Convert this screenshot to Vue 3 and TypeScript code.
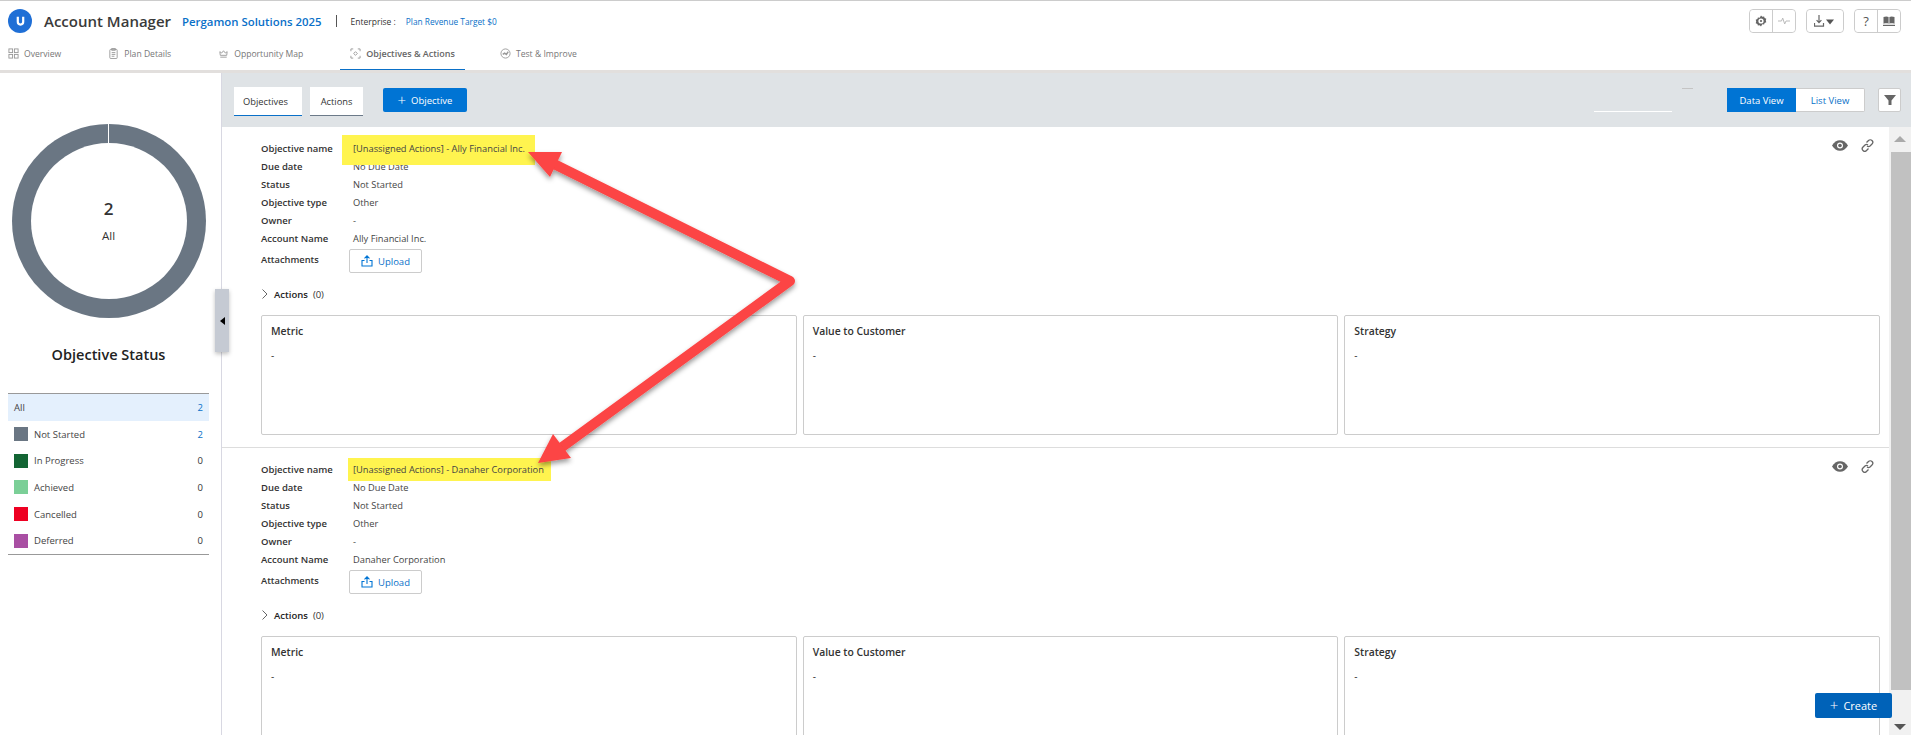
<script setup lang="ts">
interface Objective {
  name: string
  account: string
}

const tabs = [
  { label: 'Overview', icon: 'grid' },
  { label: 'Plan Details', icon: 'clip' },
  { label: 'Opportunity Map', icon: 'crown' },
  { label: 'Objectives & Actions', icon: 'target', active: true },
  { label: 'Test & Improve', icon: 'chart' },
]

const legend = [
  { label: 'Not Started', count: 2, color: '#6a7683' },
  { label: 'In Progress', count: 0, color: '#136534' },
  { label: 'Achieved', count: 0, color: '#7bcf97' },
  { label: 'Cancelled', count: 0, color: '#ee0022' },
  { label: 'Deferred', count: 0, color: '#a94fa3' },
]

const objectives: Objective[] = [
  { name: '[Unassigned Actions] - Ally Financial Inc.', account: 'Ally Financial Inc.' },
  { name: '[Unassigned Actions] - Danaher Corporation', account: 'Danaher Corporation' },
]

const boxes = ['Metric', 'Value to Customer', 'Strategy']
</script>

<template>
  <div class="page">
    <header class="top">
      <div class="title-row">
        <span class="logo">
          <svg width="11" height="12" viewBox="0 0 13 14"><path d="M2 2v6a4.500 4.500 0 0 0 9 0V2H8.400v6a1.900 1.900 0 0 1-3.800 0V2z" fill="#fff" /></svg>
        </span>
        <span class="app-name">Account Manager</span>
        <span class="plan-name">Pergamon Solutions 2025</span>
        <span class="sep"></span>
        <span class="segment">Enterprise :</span>
        <span class="target">Plan Revenue Target $0</span>
        <div class="tools">
          <div class="tool-group">
            <button class="tool">
              <svg width="12" height="12" viewBox="0 0 12 12"><path d="M6 .5l1.300 1.200 1.800-.3.500 1.700 1.700.7-.5 1.700.5 1.800-1.700.6-.5 1.700-1.800-.3L6 11.500l-1.300-1.200-1.800.3-.5-1.700-1.700-.6.5-1.800-.5-1.700 1.700-.7.5-1.700 1.800.3z" fill="#666" /><circle cx="6" cy="6" r="2.600" fill="#fff" /><circle cx="6" cy="6" r="1.100" fill="#666" /></svg>
            </button>
            <button class="tool">
              <svg width="12" height="8" viewBox="0 0 12 8"><path d="M0 4h3.500l1.200-3 2 6 1.300-3h4" fill="none" stroke="#bbb" stroke-width="1" /></svg>
            </button>
          </div>
          <div class="tool-group">
            <button class="tool wide">
              <svg width="22" height="12" viewBox="0 0 22 12"><path d="M5 0v7.500M2.600 5.200L5 7.700l2.400-2.500M.5 8v3.200h9V8" fill="none" stroke="#666" stroke-width="1.200" /><path d="M12 4.500h8l-4 5z" fill="#555" /></svg>
            </button>
          </div>
          <div class="tool-group">
            <button class="tool q">?</button>
            <button class="tool">
              <svg width="12" height="10" viewBox="0 0 12 10"><path d="M.5 1C2.500.3 4.300.3 5.600 1v6.800C4.300 7.200 2.500 7.200.5 7.800zM11.500 1C9.500.3 7.700.3 6.400 1v6.800c1.300-.6 3.100-.6 5.100 0z" fill="#666" /><path d="M0 8.800h12V10H0z" fill="#666" /></svg>
            </button>
          </div>
        </div>
      </div>
      <nav class="tabs">
        <a v-for="t in tabs" :key="t.label" class="tab" :class="{ active: t.active }">
          <svg width="11" height="11" viewBox="0 0 12 12" fill="none" stroke="#999" stroke-width="1">
            <template v-if="t.icon === 'grid'">
              <rect x="1" y="1" width="4" height="4" /><rect x="7" y="1" width="4" height="4" /><rect x="1" y="7" width="4" height="4" /><rect x="7" y="7" width="4" height="4" />
            </template>
            <template v-else-if="t.icon === 'clip'">
              <rect x="2" y="1.500" width="8" height="10" rx="1" /><path d="M4 .5h4v2H4zM4 5h4M4 7h4M4 9h3" />
            </template>
            <template v-else-if="t.icon === 'crown'">
              <path d="M2.500 8L2 4l2 1.500L6 3l2 2.500L10 4l-.5 4zM2.500 10h7" />
            </template>
            <template v-else-if="t.icon === 'target'">
              <path d="M1 3.500V1h2.500M8.500 1H11v2.500M11 8.500V11H8.500M3.500 11H1V8.500" /><path d="M6 4l2 2-2 2-2-2z" />
            </template>
            <template v-else>
              <circle cx="6" cy="6" r="5" /><path d="M3 7l2-1.500L7 7l2-3" stroke-width="1.600" />
            </template>
          </svg>
          <span>{{ t.label }}</span>
        </a>
      </nav>
    </header>

    <div class="body">
      <aside class="side">
        <div class="donut">
          <div class="donut-hole">
            <strong>2</strong>
            <span>All</span>
          </div>
        </div>
        <h2>Objective Status</h2>
        <div class="legend">
          <div class="legend-row selected">
            <span class="legend-label">All</span>
            <span class="count blue">2</span>
          </div>
          <div v-for="l in legend" :key="l.label" class="legend-row">
            <i class="swatch" :style="{ background: l.color }"></i>
            <span class="legend-label">{{ l.label }}</span>
            <span class="count" :class="{ blue: l.count > 0 }">{{ l.count }}</span>
          </div>
        </div>
        <button class="collapse"><i></i></button>
      </aside>

      <main class="main">
        <div class="toolbar">
          <button class="sub-tab on">Objectives</button>
          <button class="sub-tab">Actions</button>
          <button class="add-btn"><span class="plus">+</span> Objective</button>
          <div class="toolbar-right">
            <div class="search-line"><i></i></div>
            <div class="view-switch">
              <button class="view on">Data View</button>
              <button class="view">List View</button>
            </div>
            <button class="filter">
              <svg width="12" height="12" viewBox="0 0 12 12"><path d="M0 1h12L7.500 6.500V11h-3V6.500z" fill="#666" /></svg>
            </button>
          </div>
        </div>

        <div class="scroller">
          <div class="list">
            <section v-for="o in objectives" :key="o.name" class="objective">
              <div class="row-icons">
                <svg width="16" height="11" viewBox="0 0 15 10"><path d="M0 5c2-3.300 4.500-5 7.500-5S13 1.700 15 5c-2 3.300-4.500 5-7.500 5S2 8.300 0 5z" fill="#666" /><circle cx="7.500" cy="5" r="2.800" fill="#fff" /><circle cx="7.500" cy="5" r="1.700" fill="#666" /></svg>
                <svg width="13" height="13" viewBox="0 0 13 13" fill="none" stroke="#666" stroke-width="1.300"><path d="M5.500 3.500l2-2a2.300 2.300 0 0 1 3.500 3.500l-2 2a2.300 2.300 0 0 1-3 0" /><path d="M7.500 9.500l-2 2A2.300 2.300 0 0 1 2 8l2-2a2.300 2.300 0 0 1 3 0" /></svg>
              </div>
              <dl class="fields">
                <dt>Objective name</dt><dd><mark>{{ o.name }}</mark></dd>
                <dt>Due date</dt><dd>No Due Date</dd>
                <dt>Status</dt><dd>Not Started</dd>
                <dt>Objective type</dt><dd>Other</dd>
                <dt>Owner</dt><dd>-</dd>
                <dt>Account Name</dt><dd>{{ o.account }}</dd>
              </dl>
              <div class="attach">
                <span class="attach-label">Attachments</span>
                <button class="upload">
                  <svg width="12" height="12" viewBox="0 0 12 12" fill="none" stroke="#0074d4" stroke-width="1.100"><path d="M6 8V1M3.500 3.300L6 .8l2.500 2.500M3.500 5.500H1v5.500h10V5.500H8.500" /></svg>
                  Upload
                </button>
              </div>
              <div class="actions-line">
                <svg width="8" height="10" viewBox="0 0 8 10"><path d="M1.500.5L6 5 1.500 9.500" fill="none" stroke="#666" /></svg>
                <b>Actions</b><span>(0)</span>
              </div>
              <div class="boxes">
                <div v-for="b in boxes" :key="b" class="box">
                  <h4>{{ b }}</h4>
                  <p>-</p>
                </div>
              </div>
            </section>
          </div>
          <div class="scrollbar">
            <i class="arrow up"></i>
            <div class="thumb"></div>
            <i class="arrow down"></i>
          </div>
        </div>
      </main>
    </div>

    <button class="create"><span class="plus">+</span> Create</button>

    <!-- annotation drawn over the screenshot -->
    <svg class="annotation" width="1911" height="735" viewBox="0 0 1911 735">
      <defs>
        <filter id="sh" x="-10%" y="-10%" width="120%" height="120%">
          <feDropShadow dx="0" dy="3" stdDeviation="2.500" flood-color="#000" flood-opacity="0.4" />
        </filter>
      </defs>
      <g filter="url(#sh)">
        <path d="M554 164L790 281L558 450" fill="none" stroke="#fc4444" stroke-width="10" stroke-linejoin="round" />
        <path d="M528 152L562 152L550 177z" fill="#fc4444" />
        <path d="M538 463L553 434L571 458z" fill="#fc4444" />
      </g>
    </svg>
  </div>
</template>

<style>
html, body { margin: 0; background: #fff; overflow: hidden; }
</style>

<style scoped>
.page { position: relative; width: 1911px; height: 735px; overflow: hidden; font-family: "Open Sans", "Liberation Sans", sans-serif; color: #333; font-size: 10px; }
button { font-family: inherit; cursor: pointer; }

.top { height: 69px; border-top: 1px solid #ccc; border-bottom: 3px solid #e2dfdd; display: flex; flex-direction: column; }
.title-row { display: flex; align-items: center; height: 40px; padding: 0 10px 0 8px; }
.logo { width: 24px; height: 24px; border-radius: 50%; background: #1f6fd6; display: flex; align-items: center; justify-content: center; margin-right: 12px; }
.app-name { font-size: 15px; font-weight: 600; color: #3a3a3a; margin-right: 11px; }
.plan-name { font-size: 11.400px; font-weight: 600; color: #0a70c8; }
.sep { width: 1px; height: 12px; background: #555; margin: 0 14px; }
.segment { font-size: 8.500px; margin-right: 10px; }
.target { font-size: 8.300px; color: #0a70c8; }

.tools { margin-left: auto; display: flex; gap: 10px; }
.tool-group { display: flex; border: 1px solid #ccc; border-radius: 4px; height: 24px; box-sizing: border-box; }
.tool { width: 22px; padding: 0; border: 0; background: #fff; display: flex; align-items: center; justify-content: center; border-radius: 4px; }
.tool + .tool { border-left: 1px solid #ccc; border-radius: 0 4px 4px 0; width: 23px; }
.tool.wide { width: 36px; }
.tool.q { font-size: 13px; color: #555; }

.tabs { display: flex; height: 29px; gap: 27px; }
.tab { display: flex; align-items: center; gap: 5px; padding: 0 10px 3px; color: #777; font-size: 8.600px; white-space: nowrap; border-bottom: 1px solid transparent; }
.tab:first-child { padding-left: 8px; }
.tab.active { font-weight: 600; font-size: 9px; color: #666; border-bottom-color: #0a70c8; margin-right: -2px; }

.body { display: flex; height: 662px; }
.side { position: relative; width: 222px; flex: none; padding-right: 4px; box-sizing: border-box; border-right: 1px solid #d8d8e2; display: flex; flex-direction: column; align-items: center; }
.donut { width: 194px; height: 194px; margin-top: 51px; border-radius: 50%; background: #6a7683; display: flex; align-items: center; justify-content: center; position: relative; flex: none; }
.donut::before { content: ""; position: absolute; top: 0; left: 96.500px; width: 1px; height: 19px; background: #fff; }
.donut-hole { width: 156px; height: 156px; border-radius: 50%; background: #fff; display: flex; flex-direction: column; align-items: center; justify-content: center; gap: 9px; }
.donut-hole strong { font-size: 17px; font-weight: 600; line-height: 20px; }
.donut-hole span { font-size: 11.500px; line-height: 16px; }
.side h2 { margin: 27px 0 0; font-size: 14.500px; font-weight: 600; line-height: 20px; color: #222; }
.legend { width: 201px; margin-top: 28px; border-top: 1px solid #999; border-bottom: 1px solid #999; }
.legend-row { display: flex; align-items: center; height: 26.700px; padding: 0 6px; font-size: 9.500px; color: #444; }
.legend-row.selected { background: #e4f0fd; }
.swatch { width: 14px; height: 14px; margin-right: 6px; }
.legend-label { flex: 1; }
.count { color: #333; }
.count.blue { color: #0a70c8; }
.collapse { position: absolute; top: 216px; right: -8px; width: 14px; height: 63px; padding: 0; border: 0; background: #c5cad3; box-shadow: 0 2px 4px rgba(0, 0, 0, 0.25); display: flex; align-items: center; justify-content: center; }
.collapse i { border: 4px solid transparent; border-right: 5px solid #000; border-left: 0; }

.main { flex: 1; min-width: 0; display: flex; flex-direction: column; }
.toolbar { height: 54px; background: #dfe3e6; display: flex; align-items: flex-start; padding: 14px 10px 0 12px; box-sizing: border-box; }
.sub-tab { height: 29px; width: 53px; border: 0; border-bottom: 1px solid #6c7a89; background: #fff; font-size: 9.300px; color: #333; padding: 0; margin-right: 8px; }
.sub-tab.on { border-bottom-color: #0a70c8; width: 68px; text-align: left; padding-left: 9px; }
.add-btn { height: 24px; margin-left: 12px; width: 84px; border: 0; border-radius: 2px; background: #0074d4; color: #fff; font-size: 9.500px; display: flex; align-items: center; justify-content: center; gap: 5px; margin-top: 1px; }
.plus { font-size: 15px; font-weight: 300; line-height: 1; }
.toolbar-right { margin-left: auto; display: flex; align-items: flex-start; margin-top: 1px; }
.search-line { position: relative; width: 78px; height: 23px; border-bottom: 1px solid #fff; margin-right: 55px; }
.search-line i { position: absolute; top: 0; right: -21px; width: 11px; height: 1px; background: #c4c4c4; }
.view-switch { display: flex; height: 24px; margin-right: 13px; }
.view { width: 69px; border: 1px solid #ccc; border-left: 0; border-radius: 0 2px 2px 0; background: #fff; color: #0a70c8; font-size: 9.500px; padding: 0; }
.view.on { background: #0074d4; color: #fff; border: 0; border-radius: 0; }
.filter { width: 23px; height: 24px; padding: 0; border: 1px solid #ccc; border-radius: 2px; background: #fff; display: flex; align-items: center; justify-content: center; }

.scroller { flex: 1; min-height: 0; display: flex; overflow: hidden; }
.list { flex: 1; min-width: 0; }
.objective { position: relative; height: 321px; box-sizing: border-box; border-bottom: 1px solid #ddd; padding: 12px 9px 0 39px; }
.row-icons { position: absolute; top: 12px; right: 15px; display: flex; align-items: center; gap: 13px; }

.fields { display: grid; grid-template-columns: 92px 1fr; grid-auto-rows: 18px; margin: 0; align-items: center; font-size: 9.300px; }
.fields dt { font-weight: 600; color: #333; font-size: 9.500px; }
.fields dd { margin: 0; color: #444; }
mark { background: #fff44f; color: #444; display: inline-block; position: relative; z-index: 0; padding: 5px 7px 5px 5px; margin: -5px -7px -5px -5px; }
.objective:first-child mark { padding: 7px 10px 10px 11px; margin: -7px -10px -10px -11px; }

.attach { display: flex; align-items: flex-start; margin-top: 2px; height: 24px; }
.attach-label { width: 88px; font-weight: 600; font-size: 9.300px; line-height: 18px; padding-top: 2px; }
.upload { width: 73px; height: 24px; padding: 0; border: 1px solid #ccc; border-radius: 2px; background: #fff; color: #0a70c8; font-size: 9.500px; display: flex; align-items: center; justify-content: center; gap: 5px; }

.actions-line { display: flex; align-items: center; gap: 5px; height: 18px; margin-top: 12px; font-size: 9.500px; }
.actions-line b { font-weight: 600; color: #222; }
.boxes { display: grid; grid-template-columns: repeat(3, 1fr); gap: 6px; margin-top: 12px; }
.box { height: 120px; box-sizing: border-box; border: 1px solid #ccc; border-radius: 2px; padding: 7px 9px; }
.box h4 { margin: 0; font-size: 10.400px; font-weight: 600; line-height: 16px; color: #333; }
.box p { margin: 9px 0 0; font-size: 10px; line-height: 14px; }

.scrollbar { width: 22px; flex: none; background: #f1f1f1; display: flex; flex-direction: column; align-items: center; justify-content: space-between; position: relative; }
.thumb { position: absolute; top: 25px; bottom: 45px; left: 2px; right: 0; background: #c1c1c1; }
.arrow { display: block; border: 6px solid transparent; }
.arrow.up { border-bottom: 6px solid #aaa; border-top: 0; margin-top: 9px; }
.arrow.down { border-top: 6px solid #555; border-bottom: 0; margin-bottom: 5px; }

.create { position: absolute; left: 1815px; top: 693px; width: 77px; height: 25px; border: 0; border-radius: 2px; background: #0062b8; color: #fff; font-size: 11px; display: flex; align-items: center; justify-content: center; gap: 5px; padding: 0; }
.annotation { position: absolute; left: 0; top: 0; pointer-events: none; }
</style>
